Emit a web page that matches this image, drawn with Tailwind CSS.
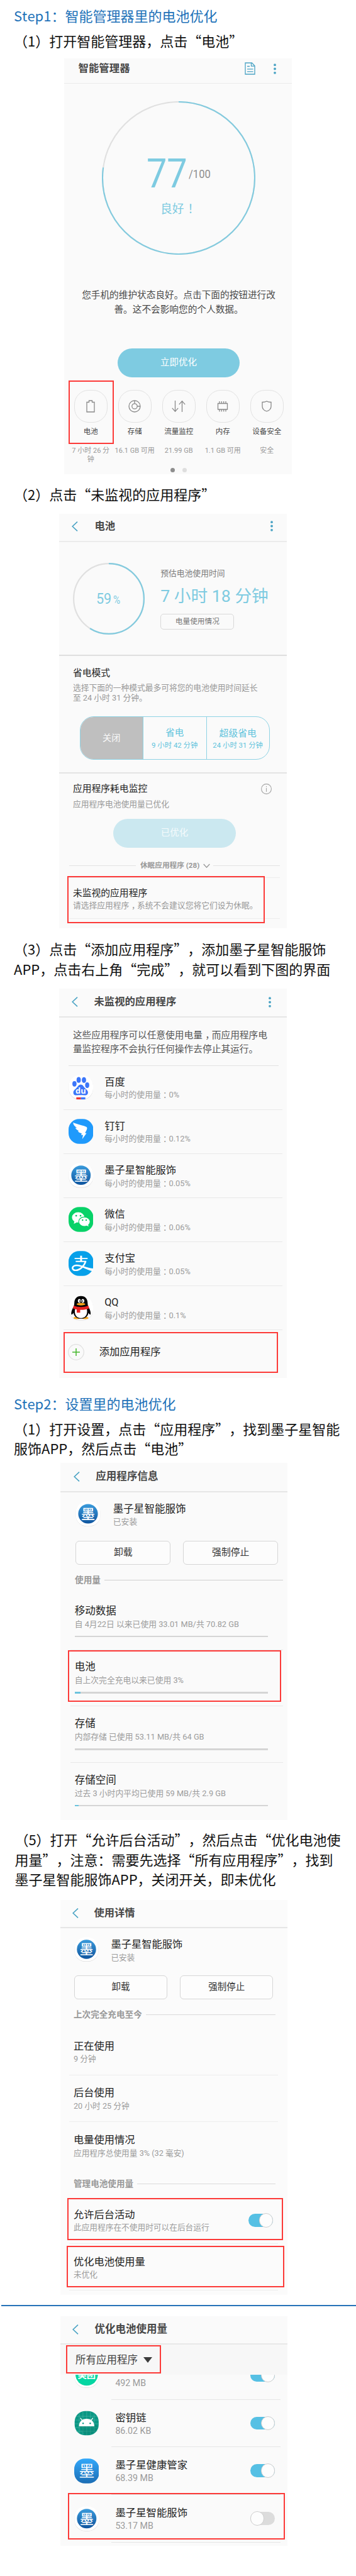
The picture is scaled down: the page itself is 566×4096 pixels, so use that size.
<!DOCTYPE html>
<html lang="zh-CN">
<head>
<meta charset="utf-8">
<meta name="viewport" content="width=device-width">
<title>电池优化设置</title>
<script src="https://cdn.jsdelivr.net/npm/@tailwindcss/browser@4"></script>
</head>
<body class="bg-white">
<svg class="absolute h-0 w-0">
  <defs>
    <linearGradient id="blue" x1="0" y1="0" x2="0" y2="1"><stop offset="0" stop-color="#3a9bdc"/><stop offset="1" stop-color="#0f559f"/></linearGradient>
    <linearGradient id="blue2" x1="0" y1="0" x2="0" y2="1"><stop offset="0" stop-color="#33a9fb"/><stop offset="1" stop-color="#1b6db4"/></linearGradient>
    <symbol id="back" viewBox="0 0 10 16"><path d="M9 .7 1.2 8 9 15.300" fill="none" stroke="#4aa3c4" stroke-width="1.6"/></symbol>
    <symbol id="more" viewBox="0 0 4 17"><g fill="#4aa3c4"><circle cx="2" cy="2.200" r="1.900"/><circle cx="2" cy="8.500" r="1.900"/><circle cx="2" cy="14.800" r="1.900"/></g></symbol>
    <symbol id="mo" viewBox="0 0 40 40">
      <rect x=".5" y=".8" width="39" height="39" rx="17" fill="#dcdcdc"/>
      <rect x=".5" y=".3" width="39" height="38.800" rx="17" fill="#fff"/>
      <circle cx="20" cy="19.700" r="15.600" fill="url(#blue)"/>
      <text x="20" y="27.800" text-anchor="middle" font-size="22" font-weight="500" fill="#fff" font-family="Noto Sans CJK SC, sans-serif">墨</text>
    </symbol>
  </defs>
</svg>
<main class="flex h-[4096px] w-[566px] flex-col overflow-hidden pt-[8.700px] font-['Noto_Sans_CJK_SC',sans-serif] text-[22px] leading-[31.400px] text-[#111] [font-kerning:none] [text-spacing-trim:space-all]">

<h1 class="ml-[22px] whitespace-nowrap text-[#2272b9]">Step1：智能管理器里的电池优化</h1>
<p class="mt-[8.500px] ml-[22px] whitespace-nowrap">（1）打开智能管理器，点击“电池”</p>

<!-- 智能管理器 -->
<section class="relative mt-[12.700px] ml-[102.200px] flex h-[661.700px] w-[361.700px] shrink-0 flex-col bg-[#fafafa] font-[Roboto,'Noto_Sans_CJK_SC',sans-serif]">
  <div class="flex h-[39px] shrink-0 items-center pb-[6px] pl-[22.400px]">
    <h2 class="text-[16.400px] font-bold text-[#484848]">智能管理器</h2>
    <svg class="ml-[182px] h-[20px] w-[17px]" viewBox="0 0 17 20" fill="none" stroke="#4aa3c4" stroke-width="1.300"><path d="M1 1h10.500L16 5.800V19H1zM10.500 1v5.200H16M4 6.500h4M4 10.800h9.500M4 14.800h9.500"/></svg>
    <svg class="ml-[29px] h-[17px] w-[4px]"><use href="#more"/></svg>
  </div>
  <div class="h-[1.600px] shrink-0 bg-[#ebebeb]"></div>
  <div class="relative mt-[28.200px] ml-[60.300px] h-[244px] w-[244px] shrink-0">
    <svg class="h-[244px] w-[244px]" viewBox="0 0 244 244" fill="none" stroke-width="2.100"><circle cx="122" cy="122" r="121" stroke="#e0e0e0"/><circle cx="122" cy="122" r="121" stroke="#82cbdf" pathLength="100" stroke-dasharray="77.200 100" transform="rotate(-90 122 122)"/></svg>
    <div class="absolute inset-x-0 top-[80px] flex h-[72px] items-center pl-[71px] leading-none">
      <span class="w-[67px] origin-left scale-x-[0.900] text-[64px] text-[#7ecbe1]">77</span><span class="origin-left scale-x-[0.900] text-[18.400px] text-[#8e8e8e]">/100</span>
    </div>
    <p class="absolute top-[157px] left-[92.500px] text-[18.800px] text-[#7ecbe1]">良好<span class="relative left-[0.300em]">！</span></p>
  </div>
  <p class="mt-[53px] pl-[2px] text-center text-[14.660px] leading-[22.200px] text-[#4a4a4a]">您手机的维护状态良好。点击下面的按钮进行改<br>善。这不会影响您的个人数据。</p>
  <button class="mt-[51.500px] ml-[84.800px] flex h-[45.300px] w-[194px] shrink-0 items-center justify-center rounded-full bg-[#7ecbe1] text-[14.500px] text-white">立即优化</button>
  <div class="mt-[20px] ml-[7px] grid w-[350px] grid-cols-5 text-center text-[11.500px] text-[#444]">
    <div class="flex flex-col items-center">
      <div class="flex h-[52.700px] w-[52.700px] items-center justify-center rounded-[23px] border border-[#e2e2e2]"><svg class="h-[20px] w-[20px]" viewBox="0 0 20 20" fill="none" stroke="#8a8a8a" stroke-width="1.300"><path d="M4 3.500h3.500V1h5v2.500H16V19H4z"/></svg></div>
      <span class="mt-[4px] leading-[20px]">电池</span>
      <span class="mt-[14px] text-[11px] leading-[14px] whitespace-nowrap text-[#999]">7 小时 26 分<br>钟</span>
    </div>
    <div class="flex flex-col items-center">
      <div class="flex h-[52.700px] w-[52.700px] items-center justify-center rounded-[23px] border border-[#e2e2e2]"><svg class="h-[20px] w-[20px]" viewBox="0 0 20 20" fill="none" stroke="#8a8a8a" stroke-width="1.300"><circle cx="10" cy="10" r="9"/><circle cx="10" cy="10" r="4.200"/><path d="M10 1v4.800M14.200 10H19"/></svg></div>
      <span class="mt-[4px] leading-[20px]">存储</span>
      <span class="mt-[14px] text-[11px] leading-[14px] whitespace-nowrap text-[#999]">16.1 GB 可用</span>
    </div>
    <div class="flex flex-col items-center">
      <div class="flex h-[52.700px] w-[52.700px] items-center justify-center rounded-[23px] border border-[#e2e2e2]"><svg class="h-[20px] w-[22px]" viewBox="0 0 22 20" fill="none" stroke="#8a8a8a" stroke-width="1.300"><path d="M5.500 1v17M.8 12.800l4.700 5.500 4.700-5.500M16.500 19V2M11.800 7.200l4.700-5.500 4.700 5.500"/></svg></div>
      <span class="mt-[4px] leading-[20px]">流量监控</span>
      <span class="mt-[14px] text-[11px] leading-[14px] whitespace-nowrap text-[#999]">21.99 GB</span>
    </div>
    <div class="flex flex-col items-center">
      <div class="flex h-[52.700px] w-[52.700px] items-center justify-center rounded-[23px] border border-[#e2e2e2]"><svg class="h-[18px] w-[18px]" viewBox="0 0 18 18" fill="none" stroke="#8a8a8a" stroke-width="1.300"><path d="M1.500 4.500h15v9.500h-15zM4 1v3.500M7.400 1v3.500M10.700 1v3.500M14 1v3.500M4 14v3.500M7.400 14v3.500M10.700 14v3.500M14 14v3.500"/></svg></div>
      <span class="mt-[4px] leading-[20px]">内存</span>
      <span class="mt-[14px] text-[11px] leading-[14px] whitespace-nowrap text-[#999]">1.1 GB 可用</span>
    </div>
    <div class="flex flex-col items-center">
      <div class="flex h-[52.700px] w-[52.700px] items-center justify-center rounded-[23px] border border-[#e2e2e2]"><svg class="h-[18px] w-[16px]" viewBox="0 0 16 18" fill="none" stroke="#8a8a8a" stroke-width="1.300"><path d="M8 1c2 1.200 4.500 1.500 7 1.500V9c0 4-3 6.800-7 8-4-1.200-7-4-7-8V2.500C3.500 2.500 6 2.200 8 1z"/></svg></div>
      <span class="mt-[4px] leading-[20px]">设备安全</span>
      <span class="mt-[14px] text-[11px] leading-[14px] whitespace-nowrap text-[#999]">安全</span>
    </div>
  </div>
  <div class="mt-[5.500px] ml-[169px] flex gap-[12px]"><i class="h-[7px] w-[7px] rounded-full bg-[#8e8e8e]"></i><i class="h-[7px] w-[7px] rounded-full bg-[#dedede]"></i></div>
  <div class="absolute top-[512.600px] left-[7.200px] h-[101px] w-[71.500px] border-2 border-[#fc3a38]"></div>
</section>

<p class="mt-[15.900px] ml-[22px] whitespace-nowrap">（2）点击“未监视的应用程序”</p>

<!-- 电池 -->
<section class="relative mt-[15.600px] ml-[94.200px] flex h-[658.300px] w-[361.800px] shrink-0 flex-col bg-[#fafafa] font-[Roboto,'Noto_Sans_CJK_SC',sans-serif]">
  <div class="flex h-[43px] shrink-0 items-center pb-[4px] pl-[20px]">
    <svg class="h-[16px] w-[10px]"><use href="#back"/></svg>
    <h2 class="ml-[26.300px] w-[279.500px] text-[16.400px] font-bold text-[#484848]">电池</h2>
    <svg class="h-[17px] w-[4px]"><use href="#more"/></svg>
  </div>
  <div class="h-[1.600px] shrink-0 bg-[#ebebeb]"></div>
  <div class="flex h-[179.400px] shrink-0 items-center pl-[21.700px]">
    <div class="relative h-[114px] w-[114px]">
      <svg class="h-[114px] w-[114px]" viewBox="0 0 114 114" fill="none" stroke-width="2.200"><circle cx="57" cy="57" r="55.900" stroke="#e0e0e0"/><circle cx="57" cy="57" r="55.900" stroke="#82cbdf" pathLength="100" stroke-dasharray="59 100" transform="rotate(-90 57 57)"/></svg>
      <div class="absolute top-[42px] left-[37.500px] flex items-baseline gap-[3px] leading-[30px] text-[#7ecbe1]"><span class="w-[23.500px] origin-left scale-x-[0.880] text-[24.500px]">59</span><span class="origin-left scale-x-[0.850] text-[18px]">%</span></div>
    </div>
    <div class="ml-[25.300px]">
      <p class="text-[12.800px] leading-[20px] text-[#7b7b7b]">预估电池使用时间</p>
      <p class="mt-[6px] text-[26.700px] leading-[40px] whitespace-nowrap text-[#7ecbe1]">7 小时 18 分钟</p>
      <button class="mt-[8px] flex h-[24.600px] w-[117.300px] items-center justify-center rounded-[5px] border border-[#d9d9d9] text-[11.700px] text-[#777]">电量使用情况</button>
    </div>
  </div>
  <div class="h-[1.600px] shrink-0 bg-[#dfdfdf]"></div>
  <h3 class="mt-[16.700px] ml-[21.700px] text-[14.800px] leading-[20px] text-[#222]">省电模式</h3>
  <p class="mt-[6px] ml-[21.700px] text-[12.780px] leading-[16px] whitespace-nowrap text-[#999]">选择下面的一种模式最多可将您的电池使用时间延长<br>至 24 小时 31 分钟。</p>
  <div class="mt-[21.800px] ml-[32.500px] flex h-[69px] w-[302px] shrink-0 overflow-hidden rounded-[22px] border-[1.500px] border-[#8fd3e4] text-center text-[#5fc3dc]">
    <div class="flex w-[99px] items-center justify-center bg-[#bfbfbf] text-[14.200px] text-white/90">关闭</div>
    <div class="flex w-[102px] flex-col border-x border-[#8fd3e4] pt-[16px]"><b class="text-[14.500px] leading-[20px] font-normal">省电</b><span class="text-[11.400px] leading-[18px]">9 小时 42 分钟</span></div>
    <div class="flex flex-1 flex-col pt-[16px]"><b class="text-[14.800px] leading-[20px] font-normal">超级省电</b><span class="text-[11.400px] leading-[18px] whitespace-nowrap">24 小时 31 分钟</span></div>
  </div>
  <div class="mt-[20px] h-[1.600px] shrink-0 bg-[#e4e4e4]"></div>
  <div class="mt-[14.500px] flex h-[20px] shrink-0 items-center justify-between pr-[24.200px] pl-[21.700px]">
    <h3 class="text-[14.800px] text-[#222]">应用程序耗电监控</h3>
    <svg class="h-[17px] w-[17px]" viewBox="0 0 17 17" fill="none" stroke="#a5a5a5" stroke-width="1.100"><circle cx="8.500" cy="8.500" r="7.900"/><path d="M8.500 7v6M8.500 4v1.600"/></svg>
  </div>
  <p class="mt-[5px] ml-[21.700px] text-[12.780px] leading-[20px] text-[#999]">应用程序电池使用量已优化</p>
  <button class="mt-[12.500px] ml-[85.600px] flex h-[45.800px] w-[195.600px] shrink-0 items-center justify-center rounded-full bg-[#cbe8f0] text-[14.500px] text-white/80">已优化</button>
  <div class="mt-[19px] ml-[16px] flex h-[20px] w-[335px] shrink-0 items-center">
    <i class="h-px w-[105.800px] bg-[#e2e2e2]"></i>
    <span class="ml-[7px] text-[11.650px] font-bold whitespace-nowrap text-[#999]">休眠应用程序 (28)</span>
    <svg class="ml-[5.500px] h-[8px] w-[11px]" viewBox="0 0 11 8" fill="none" stroke="#999" stroke-width="1.300"><path d="M.7 1l4.800 5.300L10.300 1"/></svg>
    <i class="ml-auto h-px w-[105.800px] bg-[#e2e2e2]"></i>
  </div>
  <div class="mt-[8.500px] ml-[16px] flex h-[66px] w-[335px] shrink-0 flex-col border-y border-[#ededed] pt-[14px] pl-[5.700px]">
    <h3 class="text-[14.800px] leading-[20px] text-[#222]">未监视的应用程序</h3>
    <p class="text-[12.780px] leading-[20px] whitespace-nowrap text-[#999]">请选择应用程序<span class="relative left-[0.300em]">，</span>系统不会建议您将它们设为休眠。</p>
  </div>
  <div class="absolute top-[575.500px] left-[12.700px] h-[75.700px] w-[313.700px] border-2 border-[#fc3a38]"></div>
</section>

<p class="mt-[17.700px] ml-[22px] whitespace-nowrap">（3）点击“添加应用程序”，添加墨子星智能服饰<br>APP，点击右上角“完成”，就可以看到下图的界面</p>

<!-- 未监视的应用程序 -->
<section class="relative mt-[15.700px] ml-[94.200px] flex h-[619px] w-[361.800px] shrink-0 flex-col bg-[#fafafa] font-[Roboto,'Noto_Sans_CJK_SC',sans-serif]">
  <div class="flex h-[44.500px] shrink-0 items-center pb-[2px] pl-[20px]">
    <svg class="h-[16px] w-[10px]"><use href="#back"/></svg>
    <h2 class="ml-[25.300px] w-[278px] text-[16.350px] font-bold text-[#484848]">未监视的应用程序</h2>
    <svg class="h-[17px] w-[4px]"><use href="#more"/></svg>
  </div>
  <div class="h-[1.600px] shrink-0 bg-[#e6e6e6]"></div>
  <p class="mt-[17px] ml-[21.700px] text-[14.730px] leading-[22.300px] whitespace-nowrap text-[#555]">这些应用程序可以任意使用电量<span class="relative left-[0.300em]">，</span>而应用程序电<br>量监控程序不会执行任何操作去停止其运行。</p>
  <div class="mt-[14.200px] ml-[15.200px] h-px w-[334px] shrink-0 bg-[#e2e2e2]"></div>
  <ul class="mx-[7.200px] text-[16.300px] text-[#222]">
    <li class="flex h-[70.080px] items-center border-b border-[#e8e8e8] pl-[7.300px]">
      <svg class="h-[40px] w-[39.500px]" viewBox="0 0 40 40"><rect x=".5" y=".8" width="39" height="39" rx="17" fill="#dcdcdc"/><rect x=".5" y=".3" width="39" height="38.800" rx="17" fill="#fff"/><g fill="#3b76fa"><ellipse cx="9.500" cy="14.300" rx="3.400" ry="4.500"/><ellipse cx="16.300" cy="8" rx="3.400" ry="4.600"/><ellipse cx="24.800" cy="8.200" rx="3.400" ry="4.600"/><ellipse cx="30" cy="16.500" rx="3.300" ry="4.500"/><path d="M19.500 15.500c3.500 0 4.500 3 6.500 5.300s5.500 4 5.300 7.700c-.3 3.500-3 4.500-6 4.200-4-.5-7.500-.5-11.500 0-3 .4-6-.6-6.100-4.200-.1-3.700 3.200-5.400 5.300-7.700s3.500-5.300 6.500-5.300z"/></g><text x="19.600" y="29.800" text-anchor="middle" font-size="13" font-weight="700" fill="#fff" font-family="Open Sans, sans-serif">du</text><path d="M12.500 36h7.500v3.300h-7.500z" fill="#e33"/><path d="M20 36h7v3.300h-7z" fill="#3b76fa"/></svg>
      <div class="mt-[4px] ml-[18px]"><h3 class="leading-[20.500px]">百度</h3><p class="text-[12.800px] leading-[20px] text-[#9c9c9c]">每小时的使用量<span class="relative left-[0.250em]">：</span>0%</p></div>
    </li>
    <li class="flex h-[70.080px] items-center border-b border-[#e8e8e8] pl-[7.300px]">
      <svg class="h-[40px] w-[39.500px]" viewBox="0 0 40 40"><rect width="40" height="40" rx="17" fill="#1f9afc"/><path fill="#fff" d="M7.500 5.500c3 2.500 18.500 5 21.500 7.500 1.800 1.800.5 4.500-2.500 9.700h2.500L22 32.500l1.300-6.700h-3l.9-2.600c-3-.5-5.500-1.700-6.200-3.900l2.300.2c-3.600-1.500-5.800-3-6.200-5.500l3 .6C10 12 7.500 9.500 7.500 5.500z"/></svg>
      <div class="mt-[4px] ml-[18px]"><h3 class="leading-[20.500px]">钉钉</h3><p class="text-[12.800px] leading-[20px] text-[#9c9c9c]">每小时的使用量<span class="relative left-[0.250em]">：</span>0.12%</p></div>
    </li>
    <li class="flex h-[70.080px] items-center border-b border-[#e8e8e8] pl-[7.300px]">
      <svg class="h-[40px] w-[39.500px]"><use href="#mo"/></svg>
      <div class="mt-[4px] ml-[18px]"><h3 class="leading-[20.500px]">墨子星智能服饰</h3><p class="text-[12.800px] leading-[20px] text-[#9c9c9c]">每小时的使用量<span class="relative left-[0.250em]">：</span>0.05%</p></div>
    </li>
    <li class="flex h-[70.080px] items-center border-b border-[#e8e8e8] pl-[7.300px]">
      <svg class="h-[40px] w-[39.500px]" viewBox="0 0 40 40"><rect width="40" height="40" rx="17" fill="#08d268"/><ellipse cx="15.500" cy="16.700" rx="10" ry="8.400" fill="#fff"/><path d="M9.500 22l-1 5 5-2.500z" fill="#fff"/><ellipse cx="25.300" cy="23.500" rx="9.600" ry="8" fill="#08d268"/><ellipse cx="25.500" cy="23.600" rx="8.600" ry="7" fill="#fff"/><path d="M28 29l4.200 2.500-1-4z" fill="#fff"/><g fill="#08c462"><circle cx="12.300" cy="14" r="1.400"/><circle cx="19.300" cy="14" r="1.400"/><circle cx="22.600" cy="21" r="1.200"/><circle cx="28.400" cy="21" r="1.200"/></g></svg>
      <div class="mt-[4px] ml-[18px]"><h3 class="leading-[20.500px]">微信</h3><p class="text-[12.800px] leading-[20px] text-[#9c9c9c]">每小时的使用量<span class="relative left-[0.250em]">：</span>0.06%</p></div>
    </li>
    <li class="flex h-[70.080px] items-center border-b border-[#e8e8e8] pl-[7.300px]">
      <svg class="h-[40px] w-[39.500px]" viewBox="0 0 40 40"><rect width="40" height="40" rx="17" fill="#07a0e9"/><g fill="none" stroke="#fff"><path d="M9.700 12h21M11.500 16.700h17" stroke-width="1.900"/><path d="M20.200 7.500v9" stroke-width="3"/><path d="M27.500 16.500C25.500 24 18 31 11.500 31 5.500 31 5 26 9 23.800c5-2.300 13 .7 19.500 3.800" stroke-width="2.500"/></g><path d="M24.500 24.500c4 1.500 10 3 15.300 3.700l-1 4.300c-5.500-1-11.300-4-15.800-6.500z" fill="#fff"/></svg>
      <div class="mt-[4px] ml-[18px]"><h3 class="leading-[20.500px]">支付宝</h3><p class="text-[12.800px] leading-[20px] text-[#9c9c9c]">每小时的使用量<span class="relative left-[0.250em]">：</span>0.05%</p></div>
    </li>
    <li class="flex h-[70.080px] items-center border-b border-[#e8e8e8] pl-[7.300px]">
      <svg class="h-[40px] w-[39.500px]" viewBox="0 0 40 40"><rect x=".5" y=".8" width="39" height="39" rx="17" fill="#dcdcdc"/><rect x=".5" y=".3" width="39" height="38.800" rx="17" fill="#fff"/><ellipse cx="13.500" cy="35.800" rx="5.500" ry="2" fill="#f9a61a"/><ellipse cx="26.500" cy="35.800" rx="5.500" ry="2" fill="#f9a61a"/><path d="M20 .5c7 0 10.700 5 10.700 11 0 2 .3 4 1 6 2.500 4 4.500 9 3.800 12.500-1 1-2.500-1-3.500-2.500C31.500 33 27 37 20 37S8.500 33 8 27.500C7 29 5.500 31 4.500 30c-.7-3.500 1.300-8.500 3.800-12.500.7-2 1-4 1-6C9.300 5.500 13 .5 20 .5z" fill="#050505"/><path d="M11 20c6 2 12 2 18 0 2 6 1 16-9 16S9 26 11 20z" fill="#fff"/><path d="M8.300 16c7 3 16.500 3 23.600 0l1.300 4.500c-5 2-9.700 2.500-14.500 2.300v4.500h-5.500v-5.100L7 20.500z" fill="#e72222"/><ellipse cx="17.300" cy="8.300" rx="2.300" ry="3" fill="#fff"/><ellipse cx="23" cy="8.300" rx="2.300" ry="3" fill="#fff"/><circle cx="18" cy="8.500" r="1"/><circle cx="22.500" cy="8.500" r="1"/><ellipse cx="20" cy="13.600" rx="7" ry="2" fill="#f9a61a"/></svg>
      <div class="mt-[4px] ml-[18px]"><h3 class="leading-[20.500px]">QQ</h3><p class="text-[12.800px] leading-[20px] text-[#9c9c9c]">每小时的使用量<span class="relative left-[0.250em]">：</span>0.1%</p></div>
    </li>
    <li class="flex h-[70px] items-center pl-[6.600px]">
      <svg class="h-[26px] w-[26px]" viewBox="0 0 26 26" fill="none"><circle cx="13" cy="13" r="12.300" stroke="#e0e0e0" stroke-width="1.200"/><path d="M13 7v12M7 13h12" stroke="#45b82d" stroke-width="1.500"/></svg>
      <h3 class="ml-[23.800px]">添加应用程序</h3>
    </li>
  </ul>
  <div class="absolute top-[546.400px] left-[6.900px] h-[64.500px] w-[340.800px] border-2 border-[#fc3a38]"></div>
</section>

<h1 class="mt-[25.500px] ml-[22px] whitespace-nowrap text-[#2272b9]">Step2：设置里的电池优化</h1>
<p class="mt-[7.900px] ml-[22px] whitespace-nowrap">（1）打开设置，点击“应用程序”，找到墨子星智能<br>服饰APP，然后点击“电池”</p>

<!-- 应用程序信息 -->
<section class="relative mt-[7.800px] ml-[96px] flex h-[567.400px] w-[361.400px] shrink-0 flex-col bg-[#fafafa] font-[Roboto,'Noto_Sans_CJK_SC',sans-serif]">
  <div class="flex h-[45px] shrink-0 items-center pb-[2px] pl-[21px]">
    <svg class="h-[16px] w-[10px]"><use href="#back"/></svg>
    <h2 class="ml-[25.300px] text-[16.550px] font-bold text-[#484848]">应用程序信息</h2>
  </div>
  <div class="h-[1.600px] shrink-0 bg-[#e6e6e6]"></div>
  <div class="mt-[14.500px] flex h-[40.600px] shrink-0 items-center pl-[23.500px]">
    <svg class="h-[40.600px] w-[40px]"><use href="#mo"/></svg>
    <div class="mt-[5px] ml-[20.300px]"><h3 class="text-[16.550px] leading-[20.400px] text-[#222]">墨子星智能服饰</h3><p class="text-[12.800px] leading-[20.400px] text-[#9c9c9c]">已安装</p></div>
  </div>
  <div class="mt-[22px] ml-[24.200px] flex h-[38.300px] shrink-0 gap-[20px] text-[14.800px] text-[#333]">
    <button class="w-[151px] rounded-[6px] border border-[#d6d6d6] bg-[#fcfcfc]">卸载</button><button class="w-[151px] rounded-[6px] border border-[#d6d6d6] bg-[#fcfcfc]">强制停止</button>
  </div>
  <div class="mt-[14.300px] flex h-[20px] shrink-0 items-center gap-[6px] pr-[7.200px] pl-[23px]"><h4 class="text-[13.650px] font-bold text-[#999]">使用量</h4><i class="h-px flex-1 bg-[#d0d0d0]"></i></div>
  <div class="mx-[15.900px] mt-[11.800px] w-[338.600px] text-[12.800px] text-[#9c9c9c]">
    <div class="h-[89.600px] border-b border-[#e9e9e9] pt-[16.500px] pl-[6.800px]"><h3 class="text-[16.550px] leading-[21px] text-[#222]">移动数据</h3><p class="leading-[21px] whitespace-nowrap">自 4月22日 以来已使用 33.01 MB/共 70.82 GB</p><div class="mt-[8px] h-[2.600px] w-[307px] bg-[#d5d5d5]"></div></div>
    <div class="h-[89.600px] border-b border-[#e9e9e9] pt-[16.500px] pl-[6.800px]"><h3 class="text-[16.550px] leading-[21px] text-[#222]">电池</h3><p class="leading-[21px] whitespace-nowrap">自上次完全充电以来已使用 3%</p><div class="mt-[8px] h-[2.600px] w-[307px] bg-[#d5d5d5]"><div class="h-full w-[9.400px] bg-[#6cc3dd]"></div></div></div>
    <div class="h-[89.600px] border-b border-[#e9e9e9] pt-[16.500px] pl-[6.800px]"><h3 class="text-[16.550px] leading-[21px] text-[#222]">存储</h3><p class="leading-[21px] whitespace-nowrap">内部存储 已使用 53.11 MB/共 64 GB</p><div class="mt-[8px] h-[2.600px] w-[307px] bg-[#d5d5d5]"></div></div>
    <div class="h-[89.600px] pt-[16.500px] pl-[6.800px]"><h3 class="text-[16.550px] leading-[21px] text-[#222]">存储空间</h3><p class="leading-[21px] whitespace-nowrap">过去 3 小时内平均已使用 59 MB/共 2.9 GB</p><div class="mt-[8px] h-[2.600px] w-[307px] bg-[#d5d5d5]"><div class="h-full w-[6.500px] bg-[#6cc3dd]"></div></div></div>
  </div>
  <div class="absolute top-[297.900px] left-[11.600px] h-[81.700px] w-[339.300px] border-2 border-[#fc3a38]"></div>
</section>

<p class="mt-[15.600px] ml-[23.400px] whitespace-nowrap">（5）打开“允许后台活动”，然后点击“优化电池使<br>用量”，注意：需要先选择“所有应用程序”，找到<br>墨子星智能服饰APP，关闭开关，即未优化</p>

<!-- 使用详情 -->
<section class="relative mt-[17.600px] ml-[96px] flex h-[628.400px] w-[361.400px] shrink-0 flex-col bg-[#fbfbfb] font-[Roboto,'Noto_Sans_CJK_SC',sans-serif]">
  <div class="flex h-[43.200px] shrink-0 items-center pb-[2px] pl-[19px]">
    <svg class="h-[16px] w-[10px]"><use href="#back"/></svg>
    <h2 class="ml-[24.500px] text-[16.300px] font-bold text-[#484848]">使用详情</h2>
  </div>
  <div class="h-[1.600px] shrink-0 bg-[#e6e6e6]"></div>
  <div class="mt-[14.500px] flex h-[40px] shrink-0 items-center pl-[21.700px]">
    <svg class="h-[39.500px] w-[39px]"><use href="#mo"/></svg>
    <div class="mt-[5px] ml-[19.800px]"><h3 class="text-[16.250px] leading-[20.400px] text-[#222]">墨子星智能服饰</h3><p class="text-[12.600px] leading-[20.400px] text-[#9c9c9c]">已安装</p></div>
  </div>
  <div class="mt-[21.200px] ml-[22px] flex h-[37.500px] shrink-0 gap-[20.200px] text-[14.500px] text-[#333]">
    <button class="w-[148px] rounded-[6px] border border-[#d6d6d6] bg-[#fdfdfd]">卸载</button><button class="w-[148px] rounded-[6px] border border-[#d6d6d6] bg-[#fdfdfd]">强制停止</button>
  </div>
  <div class="mt-[14.300px] flex h-[20px] shrink-0 items-center gap-[6px] pr-[19.200px] pl-[21px]"><h4 class="text-[13.600px] font-bold text-[#999]">上次完全充电至今</h4><i class="h-px flex-1 bg-[#dadada]"></i></div>
  <div class="ml-[14.100px] w-[332px] text-[12.700px] leading-[20.500px] text-[#9c9c9c]">
    <div class="h-[86.400px] border-b border-[#ededed] pt-[30.500px] pl-[6.900px]"><h3 class="text-[16.250px] text-[#222]">正在使用</h3><p>9 分钟</p></div>
    <div class="h-[74.600px] border-b border-[#ededed] pt-[18.500px] pl-[6.900px]"><h3 class="text-[16.250px] text-[#222]">后台使用</h3><p>20 小时 25 分钟</p></div>
    <div class="h-[88px] pt-[19px] pl-[6.900px]"><h3 class="text-[16.250px] text-[#222]">电量使用情况</h3><p>应用程序总使用量 3% (32 毫安)</p></div>
  </div>
  <div class="flex h-[20px] shrink-0 items-center gap-[6px] pr-[19.200px] pl-[21px]"><h4 class="text-[13.600px] font-bold text-[#999]">管理电池使用量</h4><i class="h-px flex-1 bg-[#dadada]"></i></div>
  <div class="ml-[14.100px] w-[332px] text-[12.700px] leading-[20.700px] text-[#9c9c9c]">
    <div class="flex h-[85.700px] items-start border-b border-[#ededed] pt-[29.500px] pl-[6.900px]"><div class="flex-1"><h3 class="text-[16.250px] text-[#222]">允许后台活动</h3><p>此应用程序在不使用时可以在后台运行</p></div><div class="mt-[8.500px] mr-[8.500px] flex h-[20.500px] w-[38.500px] items-center justify-end rounded-full bg-[#56c0e4]"><i class="h-[22.500px] w-[22px] shrink-0 rounded-full border border-[#cfcfcf] bg-[#fdfdfd]"></i></div></div>
    <div class="h-[74.600px] border-b border-[#ededed] pt-[18.700px] pl-[6.900px]"><h3 class="text-[16.250px] text-[#222]">优化电池使用量</h3><p>未优化</p></div>
  </div>
  <div class="absolute top-[474.100px] left-[10.500px] h-[67.300px] w-[343.700px] border-2 border-[#fc3a38]"></div>
  <div class="absolute top-[549.800px] left-[9.800px] h-[66px] w-[346.200px] border-2 border-[#fc3a38]"></div>
</section>

<div class="mt-[15.800px] ml-[1.500px] h-[2px] shrink-0 bg-[#2673b8]"></div>

<!-- 优化电池使用量 -->
<section class="relative mt-[15.500px] ml-[96px] flex h-[365.600px] w-[361.400px] shrink-0 flex-col bg-[#fafafa] font-[Roboto,'Noto_Sans_CJK_SC',sans-serif]">
  <div class="flex h-[43.600px] shrink-0 items-center pb-[1px] pl-[19px]">
    <svg class="h-[16px] w-[10px]"><use href="#back"/></svg>
    <h2 class="ml-[25.500px] text-[16.500px] font-bold text-[#484848]">优化电池使用量</h2>
  </div>
  <div class="h-[1.600px] shrink-0 bg-[#e9e9e9]"></div>
  <div class="flex h-[48.200px] shrink-0 items-center bg-[#f7f7f7] pt-[1.500px] pl-[23.900px] text-[16.500px] text-[#444]">所有应用程序<svg class="ml-[9px] h-[9px] w-[14px]" viewBox="0 0 14 9"><path d="M0 0h14L7 9z" fill="#3c3c3c"/></svg></div>
  <ul class="h-[272.200px] shrink-0 overflow-hidden text-[14.200px] leading-[21px] text-[#9a9a9a]">
    <li class="relative -mt-[37.200px] flex h-[76px] items-center pr-[20.200px] pl-[21.700px]">
      <svg class="h-[40px] w-[39.700px]" viewBox="0 0 40 40"><rect x=".5" y=".8" width="39" height="39" rx="17" fill="#dcdcdc"/><rect x=".5" y=".3" width="39" height="38.800" rx="17" fill="#fff"/><circle cx="20" cy="18.500" r="18" fill="#05d6a2"/><text x="20" y="24" text-anchor="middle" font-size="14.500" font-weight="700" fill="#fff" font-family="Noto Sans CJK SC, sans-serif">美团</text></svg>
      <p class="mt-[25px] ml-[26px] flex-1">492 MB</p>
      <div class="flex h-[20.500px] w-[39px] items-center justify-end rounded-full bg-[#56c0e4]"><i class="h-[22.500px] w-[22px] shrink-0 rounded-full border border-[#cfcfcf] bg-[#fdfdfd]"></i></div>
    </li>
    <li class="flex h-[76px] items-center pr-[20.200px] pl-[21.700px]">
      <svg class="h-[40px] w-[39.700px]" viewBox="0 0 40 40"><rect x=".7" y=".5" width="38.500" height="39" rx="17" fill="#0a9784"/><path d="M8 4v32M14 1v38M20 1v38M26 1v38M32 4v32M3 9h34M1 15h38M1 21h38M1 27h38M3 33h34" stroke="#5fbcae" stroke-width=".5"/><path d="M8 25l8 13c9 2 20-1 22-12l-6-6z" fill="#067a6b" opacity=".35"/><path d="M7.600 25c0-7.500 5-12 12.300-12S32.200 17.500 32.200 25z" fill="#fff"/><path d="M12.800 15.500l-3-4M27 15.500l3-4" stroke="#fff" stroke-width="1.300"/><circle cx="14.200" cy="20.200" r="1.200" fill="#0a9784"/><circle cx="25.600" cy="20.200" r="1.200" fill="#0a9784"/></svg>
      <div class="mr-[-9px] ml-[19.500px] flex h-full flex-1 items-center border-y border-[#e6e6e6] pr-[9px] pl-[6.500px]"><div class="mt-[4px] flex-1"><h3 class="text-[16.400px] text-[#222]">密钥链</h3><p>86.02 KB</p></div>
      <div class="flex h-[20.500px] w-[39px] items-center justify-end rounded-full bg-[#56c0e4]"><i class="h-[22.500px] w-[22px] shrink-0 rounded-full border border-[#cfcfcf] bg-[#fdfdfd]"></i></div></div>
    </li>
    <li class="flex h-[76px] items-center pr-[20.200px] pl-[21.700px]">
      <svg class="h-[40px] w-[39.700px]" viewBox="0 0 40 40"><rect width="40" height="40" rx="17" fill="url(#blue2)"/><text x="20" y="29" text-anchor="middle" font-size="25" fill="#fff" font-family="Noto Sans CJK SC, sans-serif">墨</text></svg>
      <div class="mr-[-9px] ml-[19.500px] flex h-full flex-1 items-center border-b border-[#e6e6e6] pr-[9px] pl-[6.500px]"><div class="mt-[4px] flex-1"><h3 class="text-[16.400px] text-[#222]">墨子星健康管家</h3><p>68.39 MB</p></div>
      <div class="flex h-[20.500px] w-[39px] items-center justify-end rounded-full bg-[#56c0e4]"><i class="h-[22.500px] w-[22px] shrink-0 rounded-full border border-[#cfcfcf] bg-[#fdfdfd]"></i></div></div>
    </li>
    <li class="flex h-[76px] items-center pr-[20.200px] pl-[21.700px]">
      <svg class="h-[40px] w-[39.700px]"><use href="#mo"/></svg>
      <div class="mr-[-9px] ml-[19.500px] flex h-full flex-1 items-center border-b border-[#e6e6e6] pr-[9px] pl-[6.500px]"><div class="mt-[4px] flex-1"><h3 class="text-[16.400px] text-[#222]">墨子星智能服饰</h3><p>53.17 MB</p></div>
      <div class="flex h-[20.500px] w-[39px] items-center justify-start rounded-full bg-[#dcdcdc]"><i class="h-[22.500px] w-[22px] shrink-0 rounded-full border border-[#cfcfcf] bg-[#fdfdfd]"></i></div></div>
    </li>
  </ul>
  <div class="absolute top-[46.800px] left-[8.700px] h-[44.500px] w-[151px] border-2 border-[#fc3a38]"></div>
  <div class="absolute top-[281.300px] left-[11.600px] h-[74.400px] w-[345px] border-2 border-[#fc3a38]"></div>
</section>
</main>
</body>
</html>
